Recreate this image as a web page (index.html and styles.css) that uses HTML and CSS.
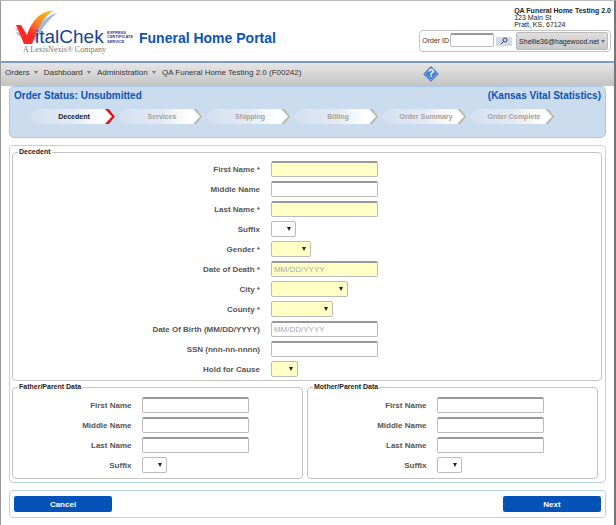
FILE: index.html
```html
<!DOCTYPE html>
<html lang="en">
<head>
    <meta charset="UTF-8">
    <meta name="viewport" content="width=device-width, initial-scale=1.0">
    <title>Funeral Home Portal</title>
    <link rel="stylesheet" href="styles.css">
</head>
<body>
<div class="page">
    <header class="header">
        <div class="brand">
            <svg class="logo" width="118" height="44" viewBox="0 0 118 44" role="img" aria-label="VitalChek, a LexisNexis company">
                <defs>
                    <linearGradient id="swoosh" x1="0" y1="1" x2="1" y2="0">
                        <stop offset="0.35" stop-color="#fb2a26"/>
                        <stop offset="0.6" stop-color="#f9822b"/>
                        <stop offset="1" stop-color="#fdc20f"/>
                    </linearGradient>
                </defs>
                <path d="M-2 17 L2 18 L4 21 Z M-1 21 L4 22 L5 26 Z" fill="#9db9e4"/>
                <path d="M17 27 C23 13 30 5 41 2 C33 8 26 17 19 31 Z" fill="#9db9e4"/>
                <path d="M0 14 L5 14 L11 24 C15 12 22 2 34 0 L37 0 C27 6 22 18 16 33 L8 33 Z" fill="url(#swoosh)"/>
                <text x="19" y="32" class="logo-name">italChek</text>
                <text x="91" y="23" class="logo-tag">EXPRESS</text>
                <text x="91" y="27" class="logo-tag">CERTIFICATE</text>
                <text x="91" y="32" class="logo-tag">SERVICE</text>
                <text x="7" y="41" class="logo-sub">A LexisNexis® Company</text>
            </svg>
            <h1>Funeral Home Portal</h1>
        </div>
        <div class="account">
            <address><strong>QA Funeral Home Testing 2.0</strong><br>123 Main St<br>Pratt, KS, 67124</address>
            <form class="search">
                <label for="order-id">Order ID</label>
                <input type="text" id="order-id" name="order-id">
                <button type="submit" class="search-btn" aria-label="Search">
                    <svg width="8" height="8" viewBox="0 0 8 8" fill="none" stroke="#2a4a7c">
                        <circle cx="5" cy="3" r="2"/>
                        <path d="M3.5 4.5 L1 7"/>
                    </svg>
                </button>
                <button type="button" class="user-btn">Shellie36@hagewood.net<span class="caret"></span></button>
            </form>
        </div>
    </header>

    <nav class="nav">
        <a href="#">Orders <span class="caret"></span></a>
        <a href="#">Dashboard <span class="caret"></span></a>
        <a href="#">Administration <span class="caret"></span></a>
        <a href="#">QA Funeral Home Testing 2.0 (F00242)</a>
        <a href="#" class="help" aria-label="Help">
            <svg width="18" height="18" viewBox="0 0 18 18">
                <path d="M9 1 L17 9 L9 17 L1 9 Z" fill="#4382cd" stroke="#a3b3c8" stroke-linejoin="round"/>
                <path d="M9 3 L15 9 L9 15 L3 9 Z" fill="none" stroke="#6fa5e2"/>
                <text x="9" y="12" text-anchor="middle">?</text>
            </svg>
        </a>
    </nav>

    <main>
        <section class="status">
            <div class="status-title">
                <h2>Order Status: Unsubmitted</h2>
                <h2>(Kansas Vital Statistics)</h2>
            </div>
            <ol class="steps">
                <li class="active">Decedent<svg width="10" height="15" viewBox="0 0 10 15"><path d="M0 0 H4 L10 7.5 L4 15 H0 L7 7.5 Z"/></svg></li>
                <li>Services<svg width="10" height="15" viewBox="0 0 10 15"><path d="M0 0 H4 L10 7.5 L4 15 H0 L7 7.5 Z"/></svg></li>
                <li>Shipping<svg width="10" height="15" viewBox="0 0 10 15"><path d="M0 0 H4 L10 7.5 L4 15 H0 L7 7.5 Z"/></svg></li>
                <li>Billing<svg width="10" height="15" viewBox="0 0 10 15"><path d="M0 0 H4 L10 7.5 L4 15 H0 L7 7.5 Z"/></svg></li>
                <li>Order Summary<svg width="10" height="15" viewBox="0 0 10 15"><path d="M0 0 H4 L10 7.5 L4 15 H0 L7 7.5 Z"/></svg></li>
                <li>Order Complete<svg width="10" height="15" viewBox="0 0 10 15"><path d="M0 0 H4 L10 7.5 L4 15 H0 L7 7.5 Z"/></svg></li>
            </ol>
        </section>

        <form id="order-form" class="panel">
            <fieldset class="decedent">
                <legend>Decedent</legend>
                <div class="row">
                    <label for="first-name">First Name *</label>
                    <input type="text" id="first-name" class="required">
                </div>
                <div class="row">
                    <label for="middle-name">Middle Name</label>
                    <input type="text" id="middle-name">
                </div>
                <div class="row">
                    <label for="last-name">Last Name *</label>
                    <input type="text" id="last-name" class="required">
                </div>
                <div class="row">
                    <label for="suffix">Suffix</label>
                    <select id="suffix" class="w-suffix"><option></option></select>
                </div>
                <div class="row">
                    <label for="gender">Gender *</label>
                    <select id="gender" class="w-gender required"><option></option></select>
                </div>
                <div class="row">
                    <label for="death-date">Date of Death *</label>
                    <input type="text" id="death-date" class="required" placeholder="MM/DD/YYYY">
                </div>
                <div class="row">
                    <label for="city">City *</label>
                    <select id="city" class="w-city required"><option></option></select>
                </div>
                <div class="row">
                    <label for="county">County *</label>
                    <select id="county" class="w-county required"><option></option></select>
                </div>
                <div class="row">
                    <label for="birth-date">Date Of Birth (MM/DD/YYYY)</label>
                    <input type="text" id="birth-date" placeholder="MM/DD/YYYY">
                </div>
                <div class="row">
                    <label for="ssn">SSN (nnn-nn-nnnn)</label>
                    <input type="text" id="ssn">
                </div>
                <div class="row">
                    <label for="hold">Hold for Cause</label>
                    <select id="hold" class="w-hold required"><option></option></select>
                </div>
            </fieldset>

            <div class="parents">
                <fieldset>
                    <legend>Father/Parent Data</legend>
                    <div class="row">
                        <label for="father-first">First Name</label>
                        <input type="text" id="father-first">
                    </div>
                    <div class="row">
                        <label for="father-middle">Middle Name</label>
                        <input type="text" id="father-middle">
                    </div>
                    <div class="row">
                        <label for="father-last">Last Name</label>
                        <input type="text" id="father-last">
                    </div>
                    <div class="row">
                        <label for="father-suffix">Suffix</label>
                        <select id="father-suffix" class="w-suffix"><option></option></select>
                    </div>
                </fieldset>
                <fieldset>
                    <legend>Mother/Parent Data</legend>
                    <div class="row">
                        <label for="mother-first">First Name</label>
                        <input type="text" id="mother-first">
                    </div>
                    <div class="row">
                        <label for="mother-middle">Middle Name</label>
                        <input type="text" id="mother-middle">
                    </div>
                    <div class="row">
                        <label for="mother-last">Last Name</label>
                        <input type="text" id="mother-last">
                    </div>
                    <div class="row">
                        <label for="mother-suffix">Suffix</label>
                        <select id="mother-suffix" class="w-suffix"><option></option></select>
                    </div>
                </fieldset>
            </div>
        </form>

        <div class="panel actions">
            <button type="button">Cancel</button>
            <button type="submit" form="order-form">Next</button>
        </div>
    </main>
</div>
</body>
</html>
```
FILE: styles.css
```css
* {
    box-sizing: border-box;
}
body {
    margin: 0;
    background-color: #fff;
    font-family: "Liberation Sans", Arial, sans-serif;
    font-size: 8px;
    color: #333;
}
input, select, button {
    font-family: inherit;
    margin: 0;
}
.page {
    min-height: 100vh;
    border-top: 1px solid #bbb;
    border-left: 1px solid #999;
    border-right: 2px solid #777;
}

/* header */
.header {
    display: flex;
    justify-content: space-between;
    height: 60px;
    padding: 6px 3px 0 15px;
}
.brand {
    display: flex;
    align-items: flex-start;
    padding-top: 4px;
}
.logo {
    display: block;
    overflow: visible;
}
.logo-name {
    font-size: 19px;
    fill: #1b3f95;
}
.logo-tag {
    font-size: 4px;
    font-weight: bold;
    fill: #1b3f95;
}
.logo-sub {
    font-family: "Liberation Serif", serif;
    font-size: 8px;
    fill: #777;
}
h1 {
    margin: 19px 0 0 5px;
    font-size: 14px;
    line-height: 16px;
    color: #0d53b5;
}
.account {
    display: flex;
    flex-direction: column;
    align-items: flex-end;
}
address {
    font-size: 7px;
    font-style: normal;
    line-height: 7px;
    color: #222;
}
.search {
    display: flex;
    align-items: center;
    height: 22px;
    margin-top: 2px;
    padding: 0 2px;
    border: 1px solid #c4c4c4;
    border-radius: 4px;
    font-size: 7px;
}
.search label {
    padding-bottom: 2px;
}
.search input {
    width: 44px;
    height: 14px;
    margin: 0 2px 2px 1px;
}
.search-btn {
    display: flex;
    align-items: center;
    justify-content: center;
    width: 16px;
    height: 9px;
    margin-right: 4px;
    padding: 0;
    border: none;
    background-color: #d4dae2;
}
.user-btn {
    height: 18px;
    padding: 0 2px;
    border: 1px solid #bbb;
    border-radius: 2px;
    background: linear-gradient(#dedede, #c8c8c8);
    font-size: 7px;
    color: #222;
}
.caret {
    display: inline-block;
    margin-left: 2px;
    border: 2px solid transparent;
    border-top: 3px solid #777;
    border-bottom: none;
    vertical-align: middle;
}

/* menu bar */
.nav {
    display: flex;
    align-items: center;
    gap: 6px;
    height: 25px;
    padding: 0 4px;
    border-top: 2px solid #7a9cc6;
    background: linear-gradient(#e6e6e6, #c3c3c3);
}
.nav a {
    color: #333;
    text-decoration: none;
    line-height: 18px;
    padding-bottom: 4px;
}
.nav .help {
    margin-left: 115px;
    padding: 0 0 2px;
}
.help svg {
    display: block;
}
.help text {
    fill: #fff;
    font-size: 10px;
    font-weight: bold;
}

/* order status */
main {
    padding: 0 8px;
}
.status {
    height: 52px;
    padding: 3px 4px 0;
    border: 1px solid #a9c6e4;
    border-radius: 5px;
    background-color: #cbdcee;
}
.status-title {
    display: flex;
    justify-content: space-between;
}
h2 {
    margin: 0;
    font-size: 10px;
    line-height: 12px;
    color: #0d53b5;
}
.steps {
    display: flex;
    gap: 4px;
    margin: 7px 0 0 17px;
    padding: 0;
    list-style: none;
}
.steps li {
    display: flex;
    align-items: center;
    justify-content: center;
    position: relative;
    width: 84px;
    height: 15px;
    padding-left: 2px;
    border-radius: 7px 0 0 7px;
    background: linear-gradient(to right, #d3dff1, #e4eaf4 50%, #fff 85%);
    clip-path: polygon(0 0, 78px 0, 100% 50%, 78px 100%, 0 100%);
    font-size: 7px;
    font-weight: bold;
    color: #a3a3a3;
}
.steps svg {
    position: absolute;
    top: 0;
    right: 0;
    fill: #bcbcbc;
}
.steps .active {
    color: #222;
}
.steps .active svg {
    fill: #e01010;
}

/* form */
.panel {
    margin-top: 7px;
    padding: 2px 3px 3px 2px;
    border: 1px solid #b9d2ea;
    border-radius: 4px;
}
fieldset {
    min-width: 0;
    margin: 0;
    padding: 4px 0 3px;
    border: 1px solid #c4c4c4;
    border-radius: 4px;
}
legend {
    margin-left: 5px;
    padding: 0 1px;
    font-size: 7px;
    font-weight: bold;
    line-height: 8px;
    color: #222;
}
.decedent {
    padding: 3px 0 1px;
}
.row {
    display: grid;
    grid-template-columns: 41% 1fr;
    column-gap: 11px;
    align-items: center;
    height: 20px;
}
.decedent .row {
    grid-template-columns: 42% 1fr;
}
.row label {
    text-align: right;
    font-weight: bold;
    color: #555;
}
input, select {
    width: 107px;
    height: 16px;
    padding: 0 2px;
    border: 1px solid #bbb;
    border-radius: 2px;
    background-color: #fff;
    font-size: 8px;
    color: #333;
}
input {
    border-top: 2px solid #999;
}
input::placeholder {
    color: #aaa;
}
select {
    appearance: none;
    background-image: url("data:image/svg+xml,%3Csvg xmlns='http://www.w3.org/2000/svg' width='4' height='4'%3E%3Cpath d='M0 0H4L2 4Z' fill='%23222'/%3E%3C/svg%3E");
    background-repeat: no-repeat;
    background-position: right 4px center;
}
.required {
    background-color: #ffffc6;
}
.w-suffix {
    width: 25px;
}
.w-gender {
    width: 40px;
}
.w-city {
    width: 77px;
}
.w-county {
    width: 62px;
}
.w-hold {
    width: 27px;
}
.parents {
    display: grid;
    grid-template-columns: 1fr 1fr;
    gap: 4px;
    margin-top: 2px;
    padding-right: 4px;
}
.actions {
    display: flex;
    justify-content: space-between;
    padding: 5px 4px;
}
.actions button {
    width: 98px;
    height: 16px;
    padding: 0;
    border: none;
    border-radius: 2px;
    background-color: #0553b8;
    font-size: 8px;
    font-weight: bold;
    color: #fff;
    cursor: pointer;
}
```
